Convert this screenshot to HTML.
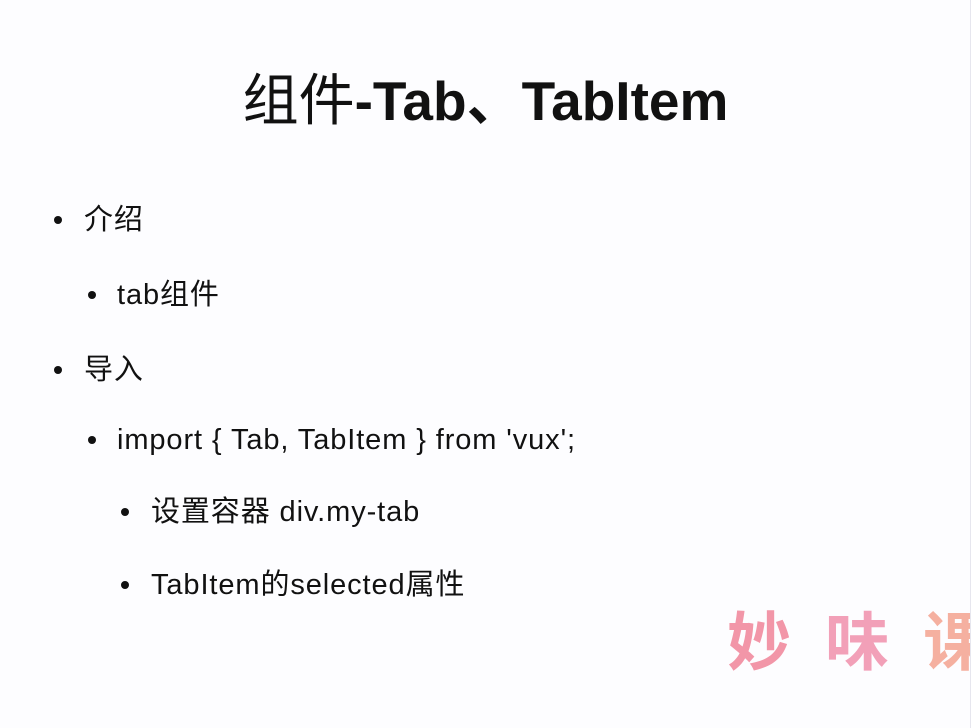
<!DOCTYPE html>
<html><head><meta charset="utf-8"><style>
html,body{margin:0;padding:0}
body{width:971px;height:728px;background:#fdfdff;position:relative;overflow:hidden;font-family:"Liberation Sans","Noto Sans CJK SC",sans-serif;color:#111}
.t{position:absolute;left:0;width:971px;top:69px;text-align:center;font-size:56px;line-height:64px}
.t b{font-size:55px}
.l{position:absolute;font-size:29px;line-height:36px;white-space:nowrap;letter-spacing:0.9px}
.d{position:absolute;width:8px;height:8px;border-radius:50%;background:#111}
.wc{position:absolute;left:722px;top:596px;width:248px;height:90px;overflow:hidden}
.w{position:absolute;left:5px;top:4px;font-size:64px;line-height:76px;font-weight:bold;letter-spacing:34px;white-space:nowrap;font-family:"Noto Sans CJK SC",sans-serif}
.edge{position:absolute;right:0;top:0;width:1px;height:728px;background:#e6e6ee}
</style></head><body>
<div class="t">组件<b>-Tab、TabItem</b></div>
<div class="d" style="left:54px;top:216px"></div><div class="l" style="left:84px;top:202px">介绍</div>
<div class="d" style="left:88px;top:291px"></div><div class="l" style="left:117px;top:277px">tab组件</div>
<div class="d" style="left:54px;top:366px"></div><div class="l" style="left:84px;top:352px">导入</div>
<div class="d" style="left:88px;top:436px"></div><div class="l" style="left:117px;top:422px">import { Tab, TabItem } from 'vux';</div>
<div class="d" style="left:121px;top:508px"></div><div class="l" style="left:151px;top:494px">设置容器 div.my-tab</div>
<div class="d" style="left:121px;top:581px"></div><div class="l" style="left:151px;top:567px">TabItem的selected属性</div>
<div class="wc"><div class="w"><span style="color:#f296a8">妙</span><span style="color:#f2a0b8">味</span><span style="color:#f5b0a0">课</span></div></div>
<div class="edge"></div>
</body></html>
